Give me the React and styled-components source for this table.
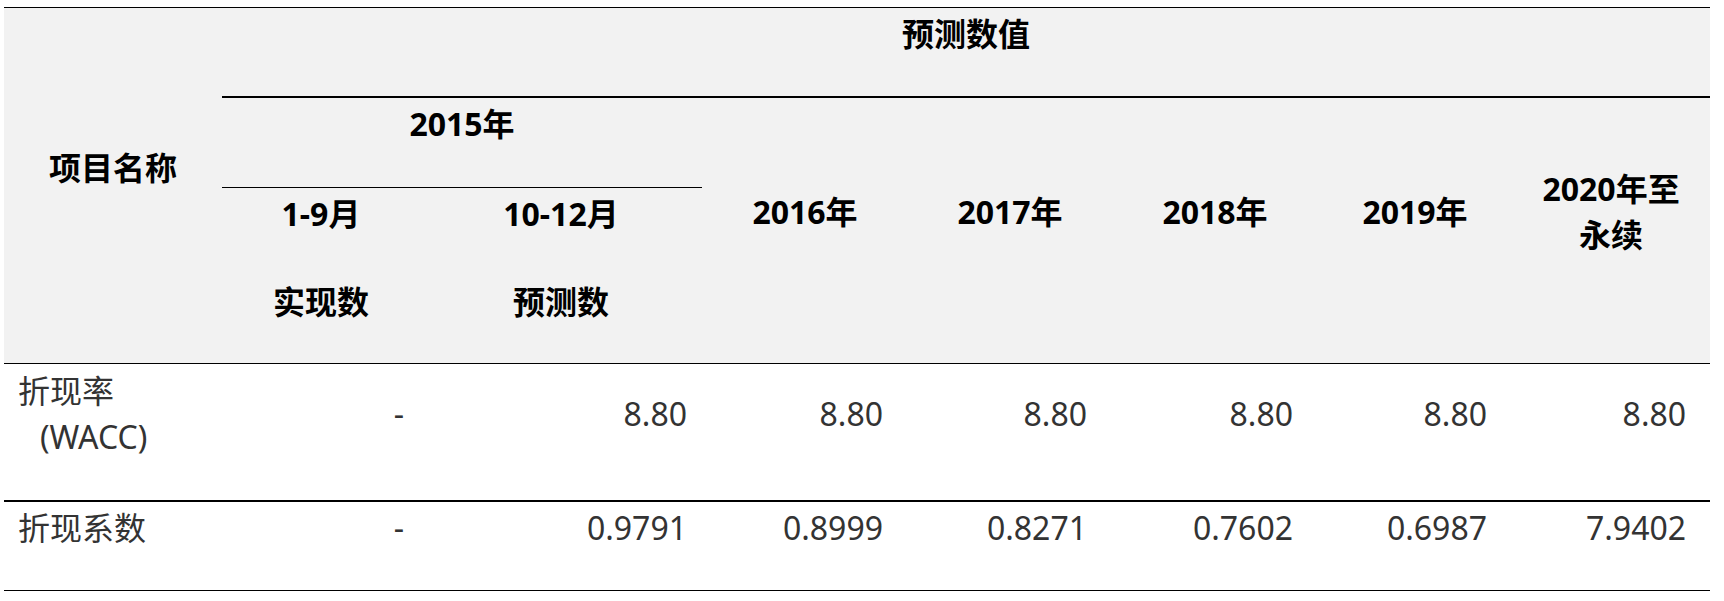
import styled, { createGlobalStyle } from "styled-components";

const GlobalStyle = createGlobalStyle`
  html, body {
    margin: 0;
    padding: 0;
    background: #ffffff;
  }
  body {
    font-family: "Noto Sans", "Noto Sans CJK SC", sans-serif;
  }
`;

// column widths and right padding of the number cells
const columns = [
  { width: 218, pad: 14 },
  { width: 198, pad: 16 },
  { width: 282, pad: 15 },
  { width: 206, pad: 25 },
  { width: 204, pad: 25 },
  { width: 206, pad: 25 },
  { width: 194, pad: 25 },
  { width: 198, pad: 24 },
];

const years = ["2016年", "2017年", "2018年", "2019年"];

const rows = [
  {
    label: ["折现率", "(WACC)"],
    values: ["-", "8.80", "8.80", "8.80", "8.80", "8.80", "8.80"],
    line: "2px",
    height: 137,
  },
  {
    label: ["折现系数"],
    values: ["-", "0.9791", "0.8999", "0.8271", "0.7602", "0.6987", "7.9402"],
    line: "1px",
    height: 90,
  },
];

export default function App() {
  return (
    <Page>
      <GlobalStyle />
      <Table>
        <colgroup>
          {columns.map((c, i) => (
            <col key={i} style={{ width: c.width }} />
          ))}
        </colgroup>
        <thead>
          <HeadRow $h={89}>
            <HeadCell rowSpan={3} $bottom="1px">项目名称</HeadCell>
            <HeadCell colSpan={7} $bottom="2px">预测数值</HeadCell>
          </HeadRow>
          <HeadRow $h={91}>
            <HeadCell colSpan={2} $bottom="1px">2015年</HeadCell>
            {years.map((y) => (
              <HeadCell key={y} rowSpan={2} $bottom="1px">{y}</HeadCell>
            ))}
            <HeadCell rowSpan={2} $bottom="1px">
              2020年至
              <br />
              永续
            </HeadCell>
          </HeadRow>
          <HeadRow $h={176}>
            <HeadCell $bottom="1px">
              <Stack>
                <span>1-9月</span>
                <span>实现数</span>
              </Stack>
            </HeadCell>
            <HeadCell $bottom="1px">
              <Stack>
                <span>10-12月</span>
                <span>预测数</span>
              </Stack>
            </HeadCell>
          </HeadRow>
        </thead>
        <tbody>
          {rows.map((r) => (
            <BodyRow key={r.label[0]} $h={r.height}>
              <LabelCell $bottom={r.line}>
                {r.label.map((l, i) => (
                  <Line key={i} $indent={i > 0}>{l}</Line>
                ))}
              </LabelCell>
              {r.values.map((v, i) => (
                <NumCell key={i} $bottom={r.line} $pad={columns[i + 1].pad}>
                  {v}
                </NumCell>
              ))}
            </BodyRow>
          ))}
        </tbody>
      </Table>
    </Page>
  );
}

const Page = styled.div`
  padding: 7px 14px 0 4px;
`;

const Table = styled.table`
  border-collapse: collapse;
  table-layout: fixed;
  width: 1706px;
  border-top: 1px solid #000;
  font-size: 32px;
  line-height: 46px;
`;

const HeadRow = styled.tr`
  height: ${(p) => p.$h}px;
  background: #f2f2f2;
`;

const BodyRow = styled.tr`
  height: ${(p) => p.$h}px;
`;

const HeadCell = styled.th`
  padding: 0 8px 36px;
  vertical-align: middle;
  text-align: center;
  font-weight: 700;
  color: #000;
  white-space: nowrap;
  border-bottom: ${(p) => (p.$bottom ? `${p.$bottom} solid #000` : "none")};
`;

const Stack = styled.div`
  display: flex;
  flex-direction: column;
  align-items: center;
  gap: 42px;
`;

const LabelCell = styled.td`
  padding: 0 8px 36px 14px;
  vertical-align: middle;
  text-align: left;
  color: #333;
  border-bottom: ${(p) => p.$bottom} solid #000;
`;

const Line = styled.div`
  white-space: nowrap;
  margin-left: ${(p) => (p.$indent ? "22px" : "0")};
`;

const NumCell = styled.td`
  padding: 0 ${(p) => p.$pad}px 36px 8px;
  vertical-align: middle;
  text-align: right;
  color: #333;
  white-space: nowrap;
  border-bottom: ${(p) => p.$bottom} solid #000;
`;
